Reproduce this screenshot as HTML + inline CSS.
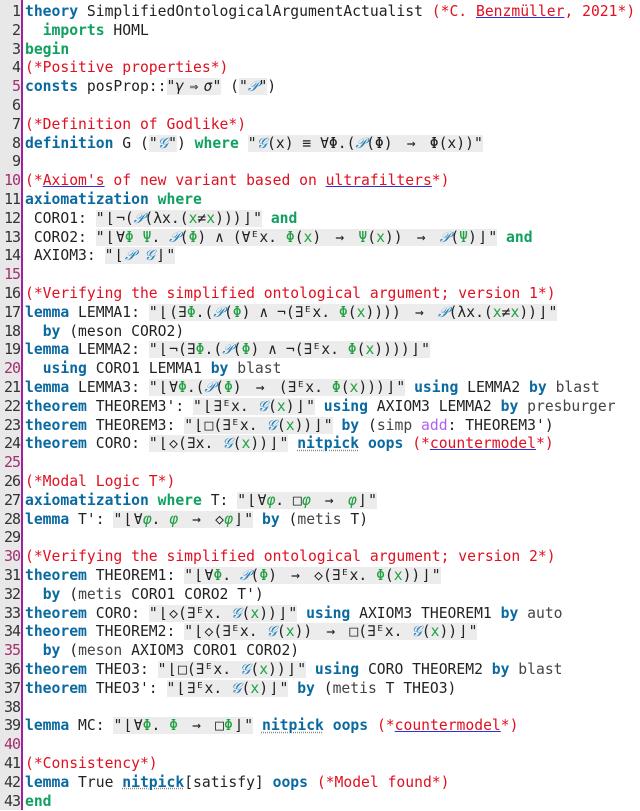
<!DOCTYPE html>
<html><head><meta charset="utf-8"><style>
body{margin:0;background:#fff;width:640px;height:810px;overflow:hidden;position:relative;font-family:"DejaVu Sans Mono","Liberation Mono",monospace;font-size:14.7px;color:#222}
#g{position:absolute;left:0;top:0;width:21px;height:810px;background:#e8e8e8}
#bar{position:absolute;left:21px;top:0;width:2px;height:810px;background:#a020a0}
.l{position:absolute;left:0;height:19px;line-height:19px;white-space:pre}
.n{display:inline-block;width:20px;text-align:right;color:#333;font-size:15px;letter-spacing:-1px}
.n.m{color:#a03070}
.t{position:absolute;left:25px;top:0}
.k{color:#0a6aa0;font-weight:bold}
.w{color:#10a060;font-weight:bold}
.c{color:#e01020}
.s{background:#ececec}
.v{color:#20a040}
.p{color:#2080c0;font-style:italic}
.q{color:#444}
.u{text-decoration:underline;text-decoration-color:#3030e0}
.d{text-decoration:underline dotted #888}
.a{color:#b060f0}
.r{display:inline-block;width:2.2ch;text-align:center;font-weight:normal}
.f{display:inline-block;width:1.3ch;text-align:center}
</style></head><body>
<div id="g"></div><div id="bar"></div>
<div class="l" style="top:2px"><span class="n">1</span><span class="t"><span class="k">theory</span> SimplifiedOntologicalArgumentActualist <span class="c">(*C. <span class="u">Benzmüller</span>, 2021*)</span></span></div>
<div class="l" style="top:20.8px"><span class="n">2</span><span class="t">  <span class="w">imports</span> HOML</span></div>
<div class="l" style="top:39.6px"><span class="n">3</span><span class="t"><span class="w">begin</span></span></div>
<div class="l" style="top:58.4px"><span class="n">4</span><span class="t"><span class="c">(*Positive properties*)</span></span></div>
<div class="l" style="top:77.2px"><span class="n m">5</span><span class="t"><span class="k">consts</span> posProp::<span class="s">"<i>γ</i><span class="r">⇒</span><i>σ</i>"</span> (<span class="s">"<span class="p">𝒫</span>"</span>)</span></div>
<div class="l" style="top:96px"><span class="n">6</span></div>
<div class="l" style="top:114.8px"><span class="n">7</span><span class="t"><span class="c">(*Definition of Godlike*)</span></span></div>
<div class="l" style="top:133.6px"><span class="n">8</span><span class="t"><span class="k">definition</span> G (<span class="s">"<span class="p">𝒢</span>"</span>) <span class="w">where</span> <span class="s">"<span class="p">𝒢</span>(x) ≡ ∀Φ.(<span class="p">𝒫</span>(Φ) <span class="r">→</span> Φ(x))"</span></span></div>
<div class="l" style="top:152.4px"><span class="n">9</span></div>
<div class="l" style="top:171.2px"><span class="n m">10</span><span class="t"><span class="c">(*<span class="u">Axiom's</span> of new variant based on <span class="u">ultrafilters</span>*)</span></span></div>
<div class="l" style="top:190px"><span class="n">11</span><span class="t"><span class="k">axiomatization</span> <span class="w">where</span></span></div>
<div class="l" style="top:208.8px"><span class="n">12</span><span class="t"> CORO1: <span class="s">"<span class="f">⌊</span>¬(<span class="p">𝒫</span>(λx.(<span class="v">x</span>≠<span class="v">x</span>)))<span class="f">⌋</span>"</span> <span class="w">and</span></span></div>
<div class="l" style="top:227.6px"><span class="n">13</span><span class="t"> CORO2: <span class="s">"<span class="f">⌊</span>∀<span class="v">Φ</span> <span class="v">Ψ</span>. <span class="p">𝒫</span>(<span class="v">Φ</span>) ∧ (∀ᴱx. <span class="v">Φ</span>(<span class="v">x</span>) <span class="r">→</span> <span class="v">Ψ</span>(<span class="v">x</span>)) <span class="r">→</span> <span class="p">𝒫</span>(<span class="v">Ψ</span>)<span class="f">⌋</span>"</span> <span class="w">and</span></span></div>
<div class="l" style="top:246.4px"><span class="n">14</span><span class="t"> AXIOM3: <span class="s">"<span class="f">⌊</span><span class="p">𝒫</span> <span class="p">𝒢</span><span class="f">⌋</span>"</span></span></div>
<div class="l" style="top:265.2px"><span class="n m">15</span></div>
<div class="l" style="top:284px"><span class="n">16</span><span class="t"><span class="c">(*Verifying the simplified ontological argument; version 1*)</span></span></div>
<div class="l" style="top:302.8px"><span class="n">17</span><span class="t"><span class="k">lemma</span> LEMMA1: <span class="s">"<span class="f">⌊</span>(∃<span class="v">Φ</span>.(<span class="p">𝒫</span>(<span class="v">Φ</span>) ∧ ¬(∃ᴱx. <span class="v">Φ</span>(<span class="v">x</span>)))) <span class="r">→</span> <span class="p">𝒫</span>(λx.(<span class="v">x</span>≠<span class="v">x</span>))<span class="f">⌋</span>"</span></span></div>
<div class="l" style="top:321.6px"><span class="n">18</span><span class="t">  <span class="k">by</span> (meson CORO2)</span></div>
<div class="l" style="top:340.4px"><span class="n">19</span><span class="t"><span class="k">lemma</span> LEMMA2: <span class="s">"<span class="f">⌊</span>¬(∃<span class="v">Φ</span>.(<span class="p">𝒫</span>(<span class="v">Φ</span>) ∧ ¬(∃ᴱx. <span class="v">Φ</span>(<span class="v">x</span>))))<span class="f">⌋</span>"</span></span></div>
<div class="l" style="top:359.2px"><span class="n m">20</span><span class="t">  <span class="k">using</span> CORO1 LEMMA1 <span class="k">by</span> <span class="q">blast</span></span></div>
<div class="l" style="top:378px"><span class="n">21</span><span class="t"><span class="k">lemma</span> LEMMA3: <span class="s">"<span class="f">⌊</span>∀<span class="v">Φ</span>.(<span class="p">𝒫</span>(<span class="v">Φ</span>) <span class="r">→</span> (∃ᴱx. <span class="v">Φ</span>(<span class="v">x</span>)))<span class="f">⌋</span>"</span> <span class="k">using</span> LEMMA2 <span class="k">by</span> <span class="q">blast</span></span></div>
<div class="l" style="top:396.8px"><span class="n">22</span><span class="t"><span class="k">theorem</span> THEOREM3': <span class="s">"<span class="f">⌊</span>∃ᴱx. <span class="p">𝒢</span>(<span class="v">x</span>)<span class="f">⌋</span>"</span> <span class="k">using</span> AXIOM3 LEMMA2 <span class="k">by</span> <span class="q">presburger</span></span></div>
<div class="l" style="top:415.6px"><span class="n">23</span><span class="t"><span class="k">theorem</span> THEOREM3: <span class="s">"<span class="f">⌊</span>□(∃ᴱx. <span class="p">𝒢</span>(<span class="v">x</span>))<span class="f">⌋</span>"</span> <span class="k">by</span> (<span class="q">simp</span> <span class="a">add</span>: THEOREM3')</span></div>
<div class="l" style="top:434.4px"><span class="n">24</span><span class="t"><span class="k">theorem</span> CORO: <span class="s">"<span class="f">⌊</span>◇(∃x. <span class="p">𝒢</span>(<span class="v">x</span>))<span class="f">⌋</span>"</span> <span class="k d">nitpick</span> <span class="k">oops</span> <span class="c">(*<span class="u">countermodel</span>*)</span></span></div>
<div class="l" style="top:453.2px"><span class="n m">25</span></div>
<div class="l" style="top:472px"><span class="n">26</span><span class="t"><span class="c">(*Modal Logic T*)</span></span></div>
<div class="l" style="top:490.8px"><span class="n">27</span><span class="t"><span class="k">axiomatization</span> <span class="w">where</span> T: <span class="s">"<span class="f">⌊</span>∀<i class="v">φ</i>. □<i class="v">φ</i> <span class="r">→</span> <i class="v">φ</i><span class="f">⌋</span>"</span></span></div>
<div class="l" style="top:509.6px"><span class="n">28</span><span class="t"><span class="k">lemma</span> T': <span class="s">"<span class="f">⌊</span>∀<i class="v">φ</i>. <i class="v">φ</i> <span class="r">→</span> ◇<i class="v">φ</i><span class="f">⌋</span>"</span> <span class="k">by</span> (<span class="q">metis</span> T)</span></div>
<div class="l" style="top:528.4px"><span class="n">29</span></div>
<div class="l" style="top:547.2px"><span class="n m">30</span><span class="t"><span class="c">(*Verifying the simplified ontological argument; version 2*)</span></span></div>
<div class="l" style="top:566px"><span class="n">31</span><span class="t"><span class="k">theorem</span> THEOREM1: <span class="s">"<span class="f">⌊</span>∀<span class="v">Φ</span>. <span class="p">𝒫</span>(<span class="v">Φ</span>) <span class="r">→</span> ◇(∃ᴱx. <span class="v">Φ</span>(<span class="v">x</span>))<span class="f">⌋</span>"</span></span></div>
<div class="l" style="top:584.8px"><span class="n">32</span><span class="t">  <span class="k">by</span> (<span class="q">metis</span> CORO1 CORO2 T')</span></div>
<div class="l" style="top:603.6px"><span class="n">33</span><span class="t"><span class="k">theorem</span> CORO: <span class="s">"<span class="f">⌊</span>◇(∃ᴱx. <span class="p">𝒢</span>(<span class="v">x</span>))<span class="f">⌋</span>"</span> <span class="k">using</span> AXIOM3 THEOREM1 <span class="k">by</span> <span class="q">auto</span></span></div>
<div class="l" style="top:622.4px"><span class="n">34</span><span class="t"><span class="k">theorem</span> THEOREM2: <span class="s">"<span class="f">⌊</span>◇(∃ᴱx. <span class="p">𝒢</span>(<span class="v">x</span>)) <span class="r">→</span> □(∃ᴱx. <span class="p">𝒢</span>(<span class="v">x</span>))<span class="f">⌋</span>"</span></span></div>
<div class="l" style="top:641.2px"><span class="n m">35</span><span class="t">  <span class="k">by</span> (<span class="q">meson</span> AXIOM3 CORO1 CORO2)</span></div>
<div class="l" style="top:660px"><span class="n">36</span><span class="t"><span class="k">theorem</span> THEO3: <span class="s">"<span class="f">⌊</span>□(∃ᴱx. <span class="p">𝒢</span>(<span class="v">x</span>))<span class="f">⌋</span>"</span> <span class="k">using</span> CORO THEOREM2 <span class="k">by</span> <span class="q">blast</span></span></div>
<div class="l" style="top:678.8px"><span class="n">37</span><span class="t"><span class="k">theorem</span> THEO3': <span class="s">"<span class="f">⌊</span>∃ᴱx. <span class="p">𝒢</span>(<span class="v">x</span>)<span class="f">⌋</span>"</span> <span class="k">by</span> (<span class="q">metis</span> T THEO3)</span></div>
<div class="l" style="top:697.6px"><span class="n">38</span></div>
<div class="l" style="top:716.4px"><span class="n">39</span><span class="t"><span class="k">lemma</span> MC: <span class="s">"<span class="f">⌊</span>∀<span class="v">Φ</span>. <span class="v">Φ</span> <span class="r">→</span> □<span class="v">Φ</span><span class="f">⌋</span>"</span> <span class="k d">nitpick</span> <span class="k">oops</span> <span class="c">(*<span class="u">countermodel</span>*)</span></span></div>
<div class="l" style="top:735.2px"><span class="n m">40</span></div>
<div class="l" style="top:754px"><span class="n">41</span><span class="t"><span class="c">(*Consistency*)</span></span></div>
<div class="l" style="top:772.8px"><span class="n">42</span><span class="t"><span class="k">lemma</span> True <span class="k d">nitpick</span>[satisfy] <span class="k">oops</span> <span class="c">(*Model found*)</span></span></div>
<div class="l" style="top:791.6px"><span class="n">43</span><span class="t"><span class="w">end</span></span></div>
</body></html>
